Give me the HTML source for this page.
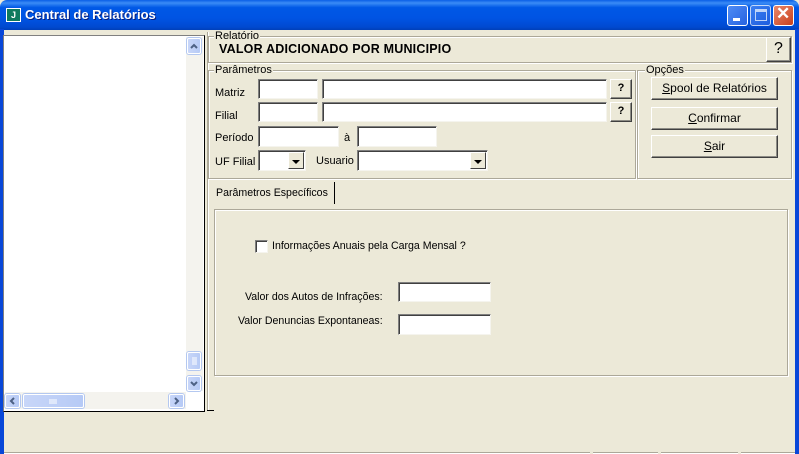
<!DOCTYPE html>
<html><head><meta charset="utf-8"><style>
*{box-sizing:border-box;margin:0;padding:0}
body{width:799px;height:454px;overflow:hidden;background:#ECE9D8;font-family:"Liberation Sans",sans-serif;font-size:11px;color:#000;position:relative}
.a{position:absolute}
.title{left:0;top:0;width:799px;height:30px;background:linear-gradient(#0A5FE6 0%,#3B8CF6 10%,#0058E6 25%,#0054E3 60%,#0049D0 90%,#003FB8 100%);border-radius:7px 7px 0 0}
.tt{left:25px;top:7px;color:#fff;font-weight:bold;font-size:13px;text-shadow:1px 1px #0A1E7A}
.wb{top:5px;width:21px;height:21px;border:1px solid #fff;border-radius:3px;background:linear-gradient(135deg,#4F8CF5,#2662E0)}
.in{background:#fff;border-top:1px solid #7F7F7F;border-left:1px solid #7F7F7F;border-right:1px solid #F5F4EE;border-bottom:1px solid #F5F4EE;box-shadow:inset 1px 1px #404040}
.btn{background:#ECE9D8;border-top:1px solid #fff;border-left:1px solid #fff;border-right:1px solid #404040;border-bottom:1px solid #404040;box-shadow:inset -1px -1px #8D8C85;text-align:center}
.grp{border:1px solid #ACA899;box-shadow:inset 1px 1px #fff,1px 1px #fff}
.lbl{background:#ECE9D8;padding:0 1px}
.sb{background:linear-gradient(90deg,#C8D6F8,#B6CAF6);border:1px solid #fff;border-radius:2px;box-shadow:0 0 0 1px #B4C8F0}
.sb svg{position:absolute;left:0;top:0}
.dd{width:16px;background:#ECE9D8;border-top:1px solid #fff;border-left:1px solid #fff;border-right:1px solid #404040;border-bottom:1px solid #404040}
.tri{width:0;height:0;border-left:4px solid transparent;border-right:4px solid transparent;border-top:4px solid #000;position:absolute;left:3px;top:7px}
</style></head><body>
<div class="a title"></div>
<div class="a" style="left:0;top:29px;width:4px;height:425px;background:#0847D8"></div>
<div class="a" style="left:795px;top:29px;width:4px;height:425px;background:#0847D8"></div>
<div class="a" style="left:6px;top:8px;width:15px;height:14px;background:#0E7A5E;border:1px solid #fff"><div class="a" style="left:4px;top:1px;color:#fff;font-weight:bold;font-size:9px">J</div></div>
<div class="a tt">Central de Relatórios</div>
<div class="a wb" style="left:727px"><div class="a" style="left:5px;top:12px;width:7px;height:3px;background:#fff"></div></div>
<div class="a wb" style="left:750px;opacity:.75"><div class="a" style="left:4px;top:3px;width:12px;height:12px;border:1px solid #fff;border-top-width:3px"></div></div>
<div class="a wb" style="left:773px;background:linear-gradient(135deg,#E9876B,#C9401C)"><div class="a" style="left:2px;top:-2px;color:#fff;font-size:17px;font-weight:bold">✕</div></div>

<div class="a" style="left:3px;top:35px;width:202px;height:377px;border:1px solid #000;border-left-color:#808080;border-top-color:#808080;background:#fff"></div>
<div class="a" style="left:186px;top:37px;width:17px;height:354px;background:#F4F3EE"></div>
<div class="a sb" style="left:187px;top:38px;width:14px;height:16px"><svg width="14" height="16"><path d="M3 9 L6 6 L9 9" stroke="#4D6185" stroke-width="2" fill="none"/></svg></div>
<div class="a sb" style="left:187px;top:352px;width:14px;height:18px"><svg width="14" height="18"><path d="M4 5h5M4 7h5M4 9h5M4 11h5" stroke="#fff" stroke-width="1"/></svg></div>
<div class="a sb" style="left:187px;top:376px;width:14px;height:15px"><svg width="14" height="15"><path d="M3 5 L6 8 L9 5" stroke="#4D6185" stroke-width="2" fill="none"/></svg></div>
<div class="a" style="left:5px;top:392px;width:181px;height:17px;background:#F4F3EE"></div>
<div class="a sb" style="left:5px;top:394px;width:15px;height:14px"><svg width="15" height="14"><path d="M8 3 L5 6 L8 9" stroke="#4D6185" stroke-width="2" fill="none"/></svg></div>
<div class="a sb" style="left:23px;top:394px;width:61px;height:14px"><svg width="61" height="14"><path d="M26 4v5M28 4v5M30 4v5M32 4v5" stroke="#fff"/></svg></div>
<div class="a sb" style="left:169px;top:394px;width:15px;height:14px"><svg width="15" height="14"><path d="M5 3 L8 6 L5 9" stroke="#4D6185" stroke-width="2" fill="none"/></svg></div>

<div class="a" style="left:207px;top:32px;width:2px;height:378px;border-left:1px solid #ACA899;border-right:1px solid #fff"></div>
<div class="a" style="left:207px;top:410px;width:7px;height:1px;background:#000"></div>

<div class="a grp" style="left:208px;top:36px;width:584px;height:27px"></div>
<div class="a lbl" style="left:214px;top:30px">Relatório</div>
<div class="a" style="left:219px;top:42px;font-weight:bold;font-size:12.5px;letter-spacing:0.2px">VALOR ADICIONADO POR MUNICIPIO</div>
<div class="a btn" style="left:766px;top:37px;width:25px;height:25px;font-size:16px;line-height:22px">?</div>

<div class="a grp" style="left:208px;top:70px;width:428px;height:109px"></div>
<div class="a lbl" style="left:214px;top:64px">Parâmetros</div>
<div class="a" style="left:215px;top:87px">Matriz</div>
<div class="a in" style="left:258px;top:79px;width:60px;height:20px"></div>
<div class="a in" style="left:322px;top:79px;width:285px;height:20px"></div>
<div class="a btn" style="left:610px;top:79px;width:22px;height:20px;font-weight:bold;line-height:17px">?</div>
<div class="a" style="left:215px;top:110px">Filial</div>
<div class="a in" style="left:258px;top:102px;width:60px;height:20px"></div>
<div class="a in" style="left:322px;top:102px;width:285px;height:20px"></div>
<div class="a btn" style="left:610px;top:102px;width:22px;height:20px;font-weight:bold;line-height:17px">?</div>
<div class="a" style="left:215px;top:132px">Período</div>
<div class="a in" style="left:258px;top:126px;width:81px;height:21px"></div>
<div class="a" style="left:344px;top:132px">à</div>
<div class="a in" style="left:357px;top:126px;width:80px;height:21px"></div>
<div class="a" style="left:215px;top:156px">UF Filial</div>
<div class="a in" style="left:258px;top:150px;width:48px;height:21px"><div class="a dd" style="right:1px;top:1px;height:17px"><div class="tri"></div></div></div>
<div class="a" style="left:316px;top:155px">Usuario</div>
<div class="a in" style="left:357px;top:150px;width:131px;height:21px"><div class="a dd" style="right:1px;top:1px;height:17px"><div class="tri"></div></div></div>

<div class="a grp" style="left:637px;top:70px;width:155px;height:109px"></div>
<div class="a lbl" style="left:645px;top:64px">Opções</div>
<div class="a btn" style="left:651px;top:77px;width:127px;height:23px;line-height:21px;font-size:12px"><u>S</u>pool de Relatórios</div>
<div class="a btn" style="left:651px;top:107px;width:127px;height:23px;line-height:21px;font-size:12px"><u>C</u>onfirmar</div>
<div class="a btn" style="left:651px;top:135px;width:127px;height:23px;line-height:21px;font-size:12px"><u>S</u>air</div>

<div class="a" style="left:334px;top:182px;width:1px;height:22px;background:#000"></div>
<div class="a" style="left:216px;top:187px;font-size:10.6px">Parâmetros Específicos</div>
<div class="a grp" style="left:214px;top:209px;width:574px;height:167px"></div>
<div class="a in" style="left:255px;top:240px;width:13px;height:13px"></div>
<div class="a" style="left:272px;top:240px;font-size:10.6px">Informações Anuais pela Carga Mensal ?</div>
<div class="a" style="left:245px;top:291px;font-size:10.6px">Valor dos Autos de Infrações:</div>
<div class="a in" style="left:398px;top:282px;width:93px;height:20px"></div>
<div class="a" style="left:238px;top:315px;font-size:10.6px">Valor Denuncias Expontaneas:</div>
<div class="a in" style="left:398px;top:314px;width:93px;height:21px"></div>

<div class="a" style="left:4px;top:452px;width:791px;height:2px;border-top:1px solid #ACA899;background:#fff"></div>
<div class="a" style="left:590px;top:452px;width:3px;height:2px;background:#ECE9D8"></div>
<div class="a" style="left:658px;top:452px;width:3px;height:2px;background:#ECE9D8"></div>
<div class="a" style="left:738px;top:452px;width:3px;height:2px;background:#ECE9D8"></div>
</body></html>
